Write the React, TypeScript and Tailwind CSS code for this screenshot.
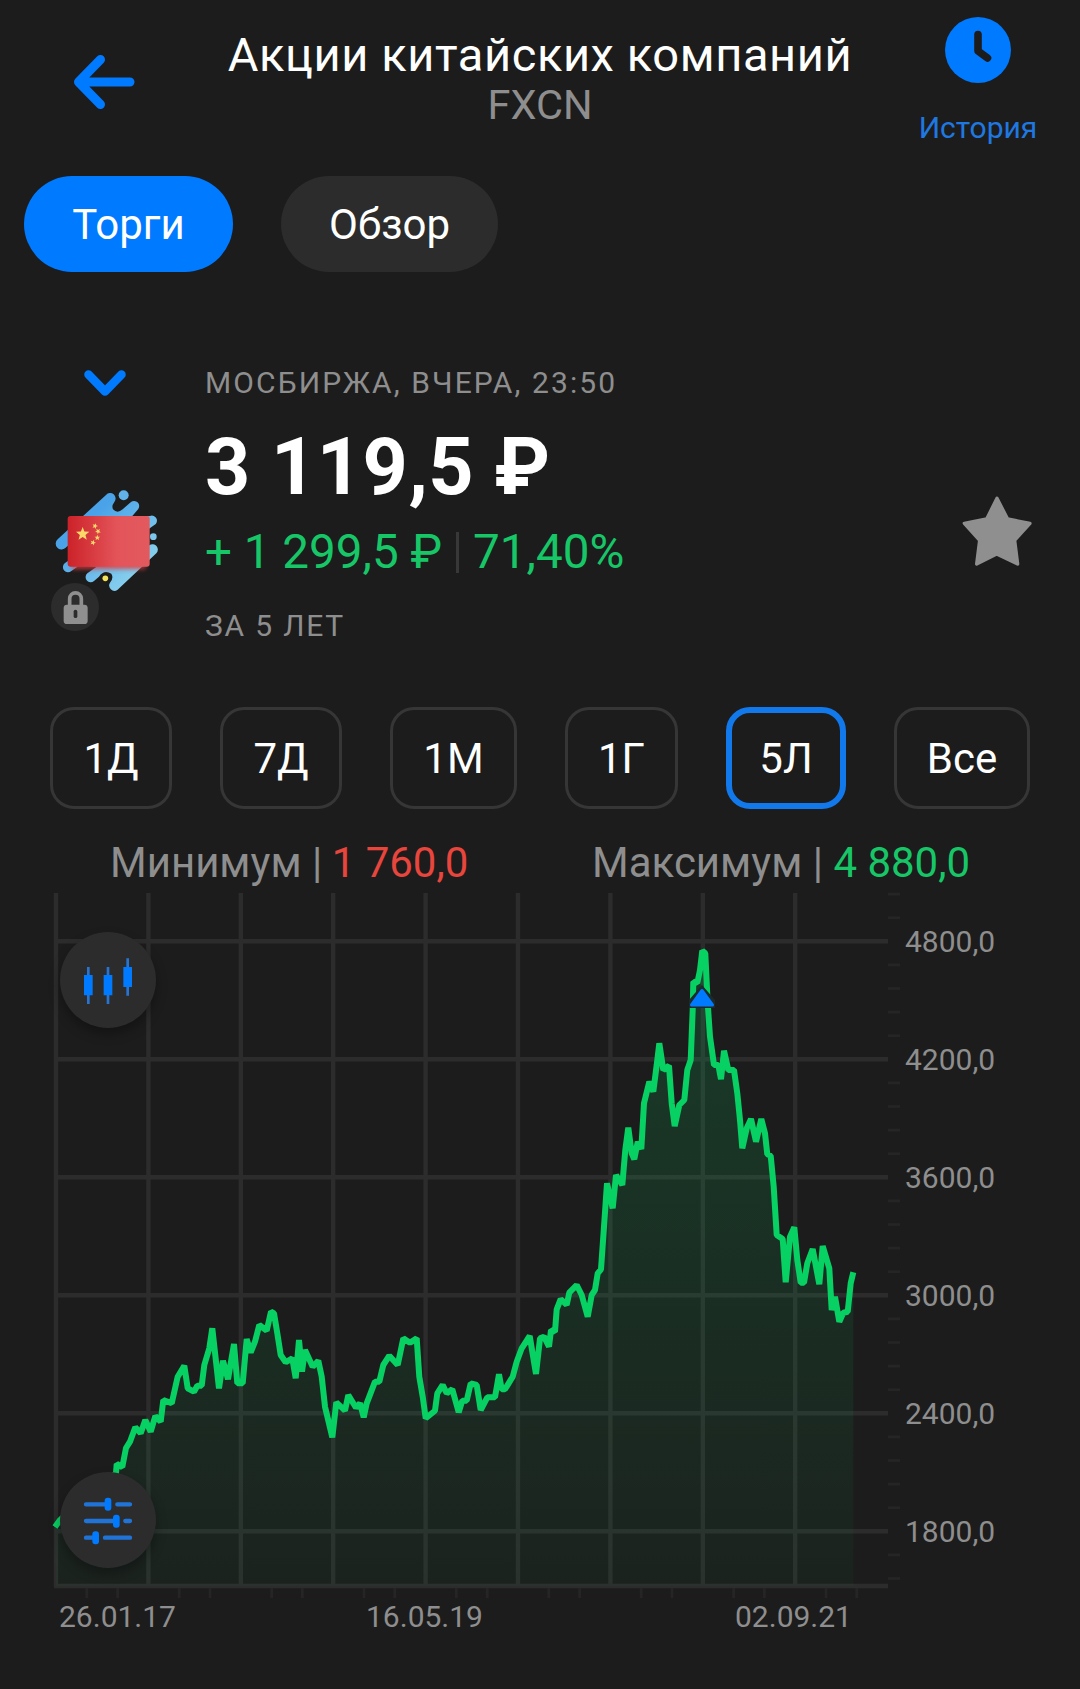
import clsx from "clsx";

type Point = [number, number];

const PERIODS = [
  { label: "1Д", width: "w-[122px]" },
  { label: "7Д", width: "w-[122px]" },
  { label: "1М", width: "w-[127px]" },
  { label: "1Г", width: "w-[113px]" },
  { label: "5Л", width: "w-[120px]", active: true },
  { label: "Все", width: "w-[136px]" },
];

const GRID_X = Array.from({ length: 9 }, (_, i) => 56 + i * 92.4);

const PRICE_LEVELS = [
  { y: 941.3, label: "4800,0" },
  { y: 1059.3, label: "4200,0" },
  { y: 1177.3, label: "3600,0" },
  { y: 1295.2, label: "3000,0" },
  { y: 1413.2, label: "2400,0" },
  { y: 1531.2, label: "1800,0" },
];

const DATES = [
  { x: 59, label: "26.01.17" },
  { x: 366, label: "16.05.19" },
  { x: 735, label: "02.09.21" },
];

// minor ticks, those that fall on a grid line are skipped
const PRICE_TICKS = Array.from({ length: 30 }, (_, i) => i)
  .filter((i) => i % 5 !== 2)
  .map((i) => 894.1 + i * 23.6);
const DATE_TICKS = Array.from({ length: 27 }, (_, i) => i)
  .filter((i) => i % 3 !== 0)
  .map((i) => 56 + i * 30.8);

const SERIES: Point[] = [
  [55, 1527], [60, 1520], [80, 1500], [100, 1488], [116, 1473], [116.7, 1464], [122.3, 1467],
  [126, 1448], [130, 1441.7], [135.3, 1427.3], [140.7, 1433.3], [145.3, 1420], [150.7, 1431.7],
  [155.3, 1416], [160.7, 1421.7], [163.3, 1400], [171.7, 1403.3], [177.7, 1376.7], [184.3, 1365.7],
  [187.7, 1388.3], [194, 1391.7], [197.3, 1385.7], [201.7, 1385.7], [204.3, 1365], [209.3, 1348.3],
  [212.3, 1328.3], [219, 1388.3], [223, 1360.7], [228, 1379.3], [234, 1344], [237.3, 1383.3],
  [242.7, 1383.3], [246.7, 1339], [250.7, 1352.3], [255, 1341.7], [259.3, 1325], [266.7, 1330.7],
  [271, 1311.7], [274, 1313.3], [277.3, 1333.3], [280.7, 1355], [285.7, 1362.3], [292.3, 1358.3],
  [295.7, 1378.3], [299, 1340], [302, 1371.7], [305, 1350], [312.7, 1366.7], [318.3, 1360.7],
  [321.7, 1376.7], [325, 1406.7], [332.3, 1437.3], [336.3, 1402.3], [345, 1410.7], [348.3, 1395],
  [356, 1407.7], [360, 1403.3], [363.7, 1417.3], [366.7, 1403.3], [375, 1381.7], [379.3, 1381.7],
  [383.3, 1365], [389.3, 1355.7], [397.7, 1365], [403.3, 1338.3], [410, 1342.7], [416.7, 1338.3],
  [419.3, 1376.7], [422.7, 1396.7], [425.7, 1418.3], [435, 1410.7], [437.3, 1393.3], [442.7, 1385],
  [446.7, 1393.3], [452.3, 1389.3], [458.7, 1412.3], [462.3, 1400.7], [466.7, 1400.7], [470.7, 1383.3],
  [476.7, 1385], [480.7, 1410], [487.3, 1397.3], [495, 1397.3], [499, 1374.3], [501.7, 1389.3],
  [505, 1389.3], [512.7, 1376.7], [516.7, 1361.7], [521.7, 1348.3], [529.7, 1336], [536, 1374],
  [540, 1338.3], [544, 1336.7], [549, 1346.7], [551, 1330], [555, 1331.7], [556.7, 1309.3],
  [560.7, 1299], [566.7, 1305], [569.3, 1292.7], [576.7, 1285], [581.7, 1295], [587.7, 1316.7],
  [591.7, 1295], [595, 1290], [597.7, 1273.3], [601, 1269.3], [604, 1226.7], [607, 1183.3],
  [612.7, 1208.3], [616, 1175], [622.3, 1185], [625.3, 1150], [628.3, 1127.7], [631.7, 1153.3],
  [634.3, 1159.3], [637.7, 1141.7], [641.3, 1149], [644, 1103.3], [649.3, 1081.7], [653.3, 1091.7],
  [656.7, 1065], [659.3, 1043.3], [663.3, 1070], [669, 1065.7], [671.7, 1103.3], [674.7, 1126],
  [679.3, 1105], [684.3, 1100], [687.3, 1070], [690.7, 1060], [692.7, 1010], [693.3, 981.7],
  [697.3, 983], [700, 970], [702.3, 950.7], [705.3, 953.3], [707.7, 1003.3], [710, 1036.7],
  [714, 1065], [718.3, 1065], [721, 1079.3], [724, 1050.7], [728.3, 1070], [734, 1070],
  [737.3, 1093.3], [740, 1120], [742.3, 1148.3], [746.7, 1128.3], [751, 1119], [756, 1141.7],
  [761.3, 1119], [765, 1133.3], [767.3, 1154.3], [770.7, 1155.7], [773.7, 1186.7], [776.7, 1235],
  [782.7, 1239], [785.7, 1282.3], [790, 1236.7], [794.3, 1227.3], [797.3, 1260], [800.7, 1282.7],
  [804, 1282.7], [807.3, 1263.3], [812.7, 1249], [819.3, 1284.3], [822.7, 1246], [829.3, 1268.3],
  [831.7, 1310], [835, 1296.7], [839.3, 1321.7], [843.3, 1312.7], [847.7, 1311.7], [850.7, 1283.3],
  [853.3, 1272.3],
];

const LINE = SERIES.map((p) => p.join(",")).join(" ");
const AREA = `56,1586 ${LINE} 853.3,1586`;

function starPoints(cx: number, cy: number, r: number, turn = 0) {
  return Array.from({ length: 10 }, (_, i) => {
    const radius = i % 2 ? r * 0.42 : r;
    const a = ((i * 36 - 90 + turn) * Math.PI) / 180;
    return `${cx + radius * Math.cos(a)},${cy + radius * Math.sin(a)}`;
  }).join(" ");
}

function Header() {
  return (
    <header className="flex h-[176px] justify-between">
      <button className="mt-[52px] ml-[71px] h-[60px] w-[66px]" aria-label="Назад">
        <svg viewBox="0 0 66 60" fill="none" stroke="#007aff" strokeWidth="9" strokeLinecap="round" strokeLinejoin="round">
          <path d="M59 30H8M29.5 7.500L7.500 30L29.500 52.500" />
        </svg>
      </button>
      <div className="ml-[27px] flex flex-col items-center pt-[27px] whitespace-nowrap">
        <h1 className="text-[47px] leading-[56px] tracking-[0.6px] text-white">Акции китайских компаний</h1>
        <p className="text-[41.500px] leading-[43px] text-[#8e8e8e]">FXCN</p>
      </div>
      <button className="mr-[40px] flex w-[124px] flex-col items-center pt-[17px]">
        <svg className="h-[66px] w-[66px]" viewBox="0 0 66 66">
          <circle cx="33" cy="33" r="33" fill="#007aff" />
          <path d="M33 17.500V34L42.500 41" fill="none" stroke="#1c1c1c" strokeWidth="7.600" strokeLinecap="round" strokeLinejoin="round" />
        </svg>
        <span className="mt-[27px] text-[30px] leading-[36px] text-[#1f78e0]">История</span>
      </button>
    </header>
  );
}

function Tabs() {
  return (
    <nav className="flex gap-12 pl-6 text-[42px] text-white">
      <button className="h-24 w-[209px] rounded-full bg-[#007aff]">Торги</button>
      <button className="h-24 w-[217px] rounded-full bg-[#2c2c2c]">Обзор</button>
    </nav>
  );
}

function FundLogo() {
  return (
    <svg className="mt-[83px] ml-12 h-[150px] w-28" viewBox="54 45 336 450">
      <defs>
        <linearGradient id="splash" x1="0" y1="0" x2="1" y2="1">
          <stop offset="0.300" stopColor="#4aa3e8" />
          <stop offset="0.850" stopColor="#8bd2ee" />
        </linearGradient>
        <linearGradient id="flag" x1="0" y1="0" x2="1" y2="0">
          <stop offset="0" stopColor="#cc2229" />
          <stop offset="0.600" stopColor="#e35459" />
          <stop offset="1" stopColor="#e25a5e" />
        </linearGradient>
        <filter id="flagShadow" x="-20%" y="-20%" width="140%" height="150%">
          <feGaussianBlur stdDeviation="7" />
        </filter>
      </defs>
      <path
        fill="url(#splash)"
        d="M228 75L83 208A17 17 0 0 0 106 234L130 212V262L104 280A15 15 0 0 0 124 303L150 285L200 290L172 310A15 15 0 0 0 192 333L207 320Q222 298 244 311Q252 325 240 338A16 16 0 0 0 262 360L379 250A16 16 0 0 0 358 226L340 230V188L373 165A15 15 0 0 0 360 138L305 140L323 119A15 15 0 0 0 302 97L278 118Q262 132 249 118Q244 108 253 96A16 16 0 0 0 228 75Z"
      />
      <circle cx="281" cy="76" r="15" fill="#62b2ea" />
      <circle cx="370" cy="200" r="10" fill="#7cc6ee" />
      <circle cx="226" cy="325" r="8.500" fill="#f3e35c" />
      <rect x="125" y="170" width="222" height="128" fill="#d63c42" opacity="0.750" filter="url(#flagShadow)" />
      <rect x="113" y="138" width="246" height="152" rx="9" fill="url(#flag)" />
      <g fill="#fbd968">
        <polygon points={starPoints(158, 192, 21)} />
        <polygon points={starPoints(195, 168, 9, 20)} />
        <polygon points={starPoints(204, 184, 9, 40)} />
        <polygon points={starPoints(202, 203, 9)} />
        <polygon points={starPoints(189, 218, 9, 20)} />
      </g>
      <circle cx="135" cy="411" r="72" fill="#2c2c2c" />
      <path d="M119 410V386A17.500 17.500 0 0 1 154 386V410" fill="none" stroke="#8f8f8f" strokeWidth="11" />
      <rect x="101" y="404" width="72" height="58" rx="10" fill="#8f8f8f" />
      <rect x="131" y="419" width="11" height="25" rx="5.500" fill="#2c2c2c" />
    </svg>
  );
}

function Quote() {
  return (
    <section className="mt-[90px] flex">
      <div className="flex w-[205px] flex-col">
        <svg className="ml-20 h-10 w-[50px]" viewBox="0 0 50 40" fill="none" stroke="#007aff" strokeWidth="8.500" strokeLinecap="round" strokeLinejoin="round">
          <path d="M8.500 12.500L25 29.500L41.500 12.500" />
        </svg>
        <FundLogo />
      </div>
      <div className="flex flex-col pt-px whitespace-nowrap">
        <p className="text-[30px] leading-10 tracking-[2.100px] text-[#8e8e8e]">МОСБИРЖА, ВЧЕРА, 23:50</p>
        <p className="mt-[18px] text-[79px] leading-[92px] font-bold tracking-[0.500px] text-white">3 119,5 ₽</p>
        <div className="mt-[11px] flex items-center text-[47.600px] leading-[56px] text-[#17c667]">
          <span>+ 1 299,5 ₽</span>
          <span className="ml-3.5 h-[41px] w-[3px] bg-[#383838]" />
          <span className="ml-3.5">71,40%</span>
        </div>
        <p className="mt-7 text-[30px] leading-9 tracking-[1.800px] text-[#8e8e8e]">ЗА 5 ЛЕТ</p>
      </div>
      <button className="mt-[133px] mr-[47px] ml-auto h-[73px] w-[72px]" aria-label="В избранное">
        <svg viewBox="64 46 216 218" fill="#8f8f8f" stroke="#8f8f8f" strokeWidth="10" strokeLinejoin="round">
          <path d="M172 56L204 118L271 131L225 182L234 253L171 223L111 253L120 182L74 131L141 118Z" />
        </svg>
      </button>
    </section>
  );
}

function Periods() {
  return (
    <div className="mt-[63px] flex gap-12 pl-[50px]">
      {PERIODS.map(({ label, width, active }) => (
        <button
          key={label}
          className={clsx(
            "h-[102px] rounded-3xl text-[42px] text-white",
            width,
            active ? "border-[6px] border-[#1179eb]" : "border-[3px] border-[#363636]",
          )}
        >
          {label}
        </button>
      ))}
    </div>
  );
}

function Extremes() {
  return (
    <div className="mt-7 flex h-[51px] pl-[110px] text-[42px] leading-[51px] whitespace-nowrap text-[#8e8e8e]">
      <p className="w-[482px]">
        Минимум | <span className="-ml-px text-[#e8453c]">1 760,0</span>
      </p>
      <p>
        Максимум | <span className="text-[#17c667]">4 880,0</span>
      </p>
    </div>
  );
}

function Chart() {
  return (
    <div className="relative h-[801px]">
      <svg className="block h-[801px] w-[1080px]" viewBox="0 888 1080 801">
        <defs>
          <linearGradient id="area" x1="0" y1="950" x2="0" y2="1586" gradientUnits="userSpaceOnUse">
            <stop offset="0" stopColor="#06d564" stopOpacity="0.170" />
            <stop offset="1" stopColor="#06d564" stopOpacity="0.035" />
          </linearGradient>
        </defs>
        <g stroke="#2c2c2c" strokeWidth="4.400">
          {GRID_X.map((x) => (
            <line key={x} x1={x} x2={x} y1="893" y2="1586" />
          ))}
          {PRICE_LEVELS.map(({ y }) => (
            <line key={y} x1="56" x2="888" y1={y} y2={y} />
          ))}
          <line x1="54" x2="888" y1="1586" y2="1586" />
        </g>
        <g stroke="#252525" strokeWidth="2.800">
          {PRICE_TICKS.map((y) => (
            <line key={y} x1="888" x2="900" y1={y} y2={y} />
          ))}
          {DATE_TICKS.map((x) => (
            <line key={x} x1={x} x2={x} y1="1588" y2="1598" />
          ))}
        </g>
        <polygon points={AREA} fill="url(#area)" />
        <polyline points={LINE} fill="none" stroke="#08d163" strokeWidth="6" strokeLinejoin="bevel" />
        <path d="M702 985L689 1000V1008H715V1000Z" fill="#1c2a28" />
        <path d="M702 990.500L691.500 1005H712.500Z" fill="#007aff" stroke="#007aff" strokeWidth="3" strokeLinejoin="round" />
        <g fill="#8e8e8e" fontSize="30">
          {PRICE_LEVELS.map(({ y, label }) => (
            <text key={label} x="905" y={y + 10.4}>
              {label}
            </text>
          ))}
          {DATES.map(({ x, label }) => (
            <text key={label} x={x} y="1626.500">
              {label}
            </text>
          ))}
        </g>
      </svg>
      <button className="absolute top-[44px] left-[60px] h-24 w-24 rounded-full bg-[#2c2c2c] shadow-[0_6px_12px_rgba(0,0,0,0.3)]" aria-label="Свечи">
        <svg viewBox="60 156 288 288">
          <path d="M141 261h8v111h-8zM200 261h8v111h-8zM259 235h8v112h-8z" fill="#2874d0" />
          <path d="M132 285h26v61h-26zM191 285h26v61h-26zM250 261h26v60h-26z" fill="#007aff" />
        </svg>
      </button>
      <button className="absolute top-[584px] left-[60px] h-24 w-24 rounded-full bg-[#2c2c2c] shadow-[0_6px_12px_rgba(0,0,0,0.3)]" aria-label="Настройки графика">
        <svg viewBox="60 696 288 288">
          <path
            d="M138 793H200M232 793H270M138 843H225M256 843H270M138 893H162M195 893H270"
            stroke="#2074d8"
            strokeWidth="13"
            strokeLinecap="round"
          />
          <g fill="#007aff">
            <rect x="194" y="773" width="20" height="39" rx="9" />
            <rect x="219" y="824" width="20" height="39" rx="9" />
            <rect x="157" y="874" width="20" height="39" rx="9" />
          </g>
        </svg>
      </button>
    </div>
  );
}

export default function App() {
  return (
    <main className="h-[1689px] w-[1080px] overflow-hidden bg-[#1c1c1c] font-[Roboto,'Liberation_Sans',sans-serif]">
      <Header />
      <Tabs />
      <Quote />
      <Periods />
      <Extremes />
      <Chart />
    </main>
  );
}
